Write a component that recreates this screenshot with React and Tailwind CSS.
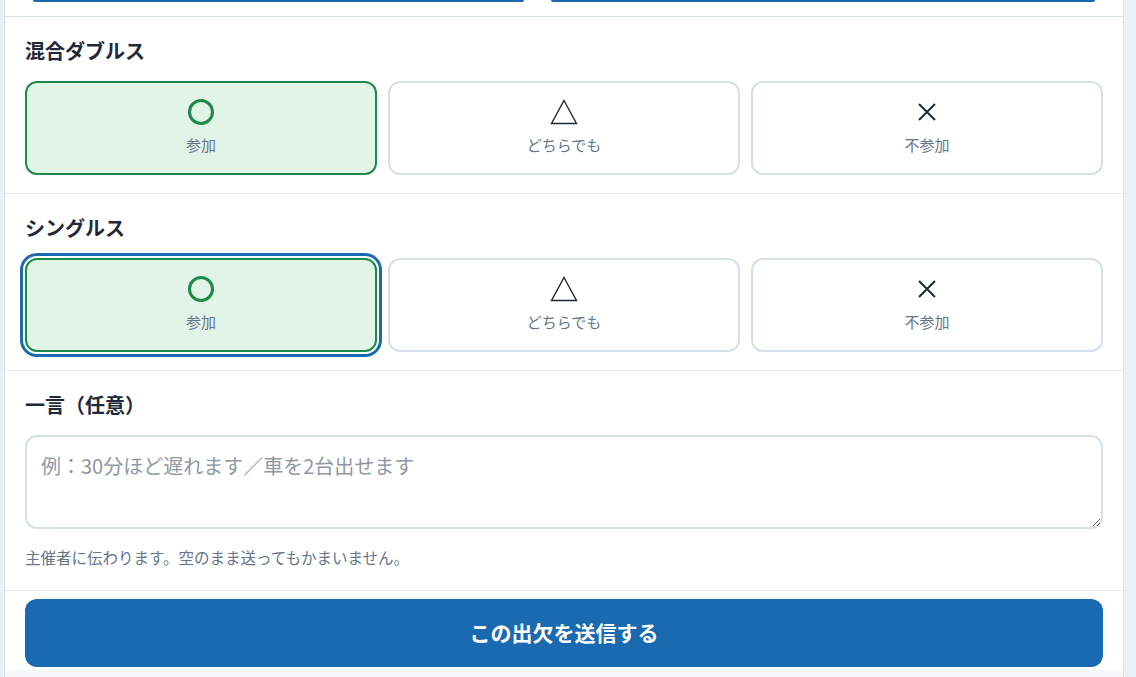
import React, { useState } from "react";

const font = { fontFamily: '"Noto Sans CJK JP", "Noto Sans", sans-serif' };

function Mark({ type }) {
  if (type === "yes")
    return (
      <svg width="28" height="28" viewBox="0 0 28 28">
        <circle cx="14" cy="14" r="11.5" fill="none" stroke="#1e8a4a" strokeWidth="3" />
      </svg>
    );
  if (type === "maybe")
    return (
      <svg width="28" height="26" viewBox="0 0 28 26">
        <path d="M14 1.5 L26.5 24.5 L1.5 24.5 Z" fill="none" stroke="#1f2937" strokeWidth="1.4" />
      </svg>
    );
  return (
    <svg width="20" height="20" viewBox="0 0 20 20">
      <path d="M2 2 L18 18 M18 2 L2 18" stroke="#1f2937" strokeWidth="2" />
    </svg>
  );
}

const OPTIONS = [
  { key: "yes", label: "参加" },
  { key: "maybe", label: "どちらでも" },
  { key: "no", label: "不参加" },
];

function Choice({ title, value, onChange, focused }) {
  return (
    <div className="px-5 pt-5 pb-[18px] border-b border-[#e6ebf1]">
      <h2 className="text-[20px] font-bold leading-7 text-[#1e293b] mb-4">{title}</h2>
      <div className="grid grid-cols-3 gap-[11px]">
        {OPTIONS.map((o) => {
          const active = value === o.key;
          return (
            <button
              key={o.key}
              type="button"
              onClick={() => onChange(o.key)}
              className={`h-[94px] rounded-xl border-2 flex flex-col items-center pt-[15px] ${
                active ? "border-[#1e8a4a] bg-[#e2f3e8]" : "border-[#d5dfea] bg-white"
              } ${active && focused ? "outline-[3px] outline-solid outline-[#1a6ab2] outline-offset-2" : ""}`}
            >
              <div className="h-[28px] flex items-center justify-center">
                <Mark type={o.key} />
              </div>
              <span className="mt-[9px] text-[15px] leading-5 text-[#64748b]">{o.label}</span>
            </button>
          );
        })}
      </div>
    </div>
  );
}

export default function App() {
  const [mixed, setMixed] = useState("yes");
  const [singles, setSingles] = useState("yes");

  return (
    <div className="min-h-screen bg-[#eaf0f6] pl-1 pr-3" style={font}>
      <div className="bg-white border-x border-[#d9e2ec] w-[1120px]">
        {/* bottom edge of the previous section's buttons */}
        <div className="h-[17px] px-5 border-b border-[#d6e1ed] flex gap-[11px]">
          <div className="w-[491px] h-[2px] bg-[#1a6ab2] mx-2 rounded-b" />
          <div className="flex-1 h-[2px] bg-[#1a6ab2] mx-2 rounded-b" />
        </div>

        <Choice title="混合ダブルス" value={mixed} onChange={setMixed} />
        <Choice title="シングルス" value={singles} onChange={setSingles} focused />

        <div className="px-5 pt-5 pb-[21px] border-b border-[#e6ebf1]">
          <h2 className="text-[20px] font-bold leading-7 text-[#1e293b] mb-4">一言（任意）</h2>
          <textarea
            className="block w-full h-[94px] rounded-xl border-2 border-[#d5dfea] px-[14px] py-[15px] text-[20px] leading-7 text-[#1e293b] placeholder:text-[#8f98a5] outline-none"
            placeholder="例：30分ほど遅れます／車を2台出せます"
          />
          <p className="mt-4 text-[15.5px] leading-6 text-[#64748b]">
            主催者に伝わります。空のまま送ってもかまいません。
          </p>
        </div>

        <div className="px-5 pt-2 pb-[3px]">
          <button
            type="button"
            className="w-full h-[68px] rounded-xl bg-[#1a6ab2] text-white text-[21px] font-bold"
          >
            この出欠を送信する
          </button>
        </div>
        <div className="h-[20px] bg-[#f6f7f9]" />
      </div>
    </div>
  );
}
